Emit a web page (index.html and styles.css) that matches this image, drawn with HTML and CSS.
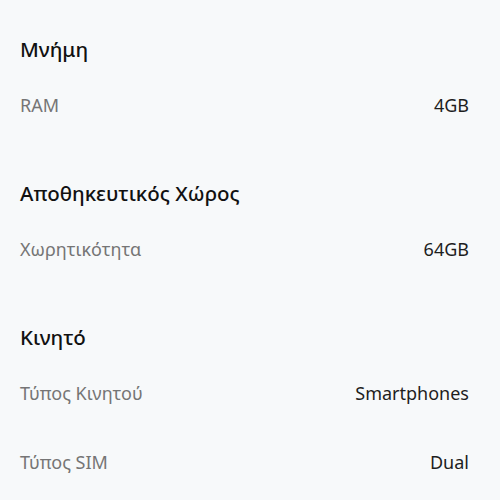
FILE: index.html
```html
<!DOCTYPE html>
<html lang="el">
<head>
    <meta charset="UTF-8">
    <meta name="viewport" content="width=device-width, initial-scale=1.0">
    <title>Προδιαγραφές</title>
    <link rel="stylesheet" href="styles.css">
</head>
<body>
    <div class="specs">
        <section class="group">
            <h2>Μνήμη</h2>
            <div class="row"><span class="label">RAM</span><span class="value">4GB</span></div>
        </section>

        <section class="group">
            <h2>Αποθηκευτικός Χώρος</h2>
            <div class="row"><span class="label">Χωρητικότητα</span><span class="value">64GB</span></div>
        </section>

        <section class="group">
            <h2>Κινητό</h2>
            <div class="row"><span class="label">Τύπος Κινητού</span><span class="value">Smartphones</span></div>
            <div class="row"><span class="label">Τύπος SIM</span><span class="value">Dual</span></div>
        </section>
    </div>
</body>
</html>
```

FILE: styles.css
```css
* {
    margin: 0;
    padding: 0;
    box-sizing: border-box;
}

body {
    background-color: #f7f9fa;
    font-family: "Noto Sans", Roboto, sans-serif;
}

.specs {
    padding: 27px 31px 0 20px;
}

.group {
    padding-bottom: 32px;
}

.group:last-child {
    padding-bottom: 0;
}

.group h2 {
    height: 43px;
    display: flex;
    align-items: center;
    font-size: 20.5px;
    font-weight: 500;
    color: #111;
}

.row {
    height: 69px;
    display: flex;
    align-items: center;
    justify-content: space-between;
    font-size: 18px;
}

.label {
    color: #757575;
}

.value {
    color: #1e1e1e;
}
```
